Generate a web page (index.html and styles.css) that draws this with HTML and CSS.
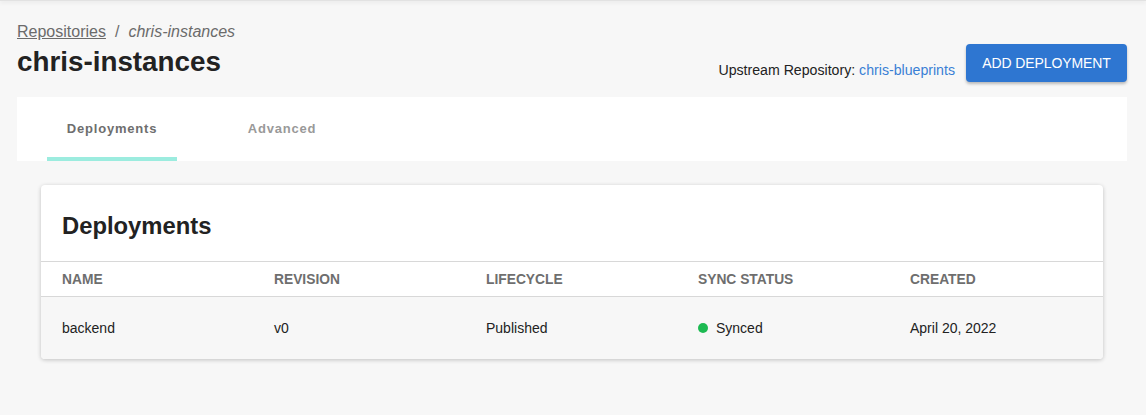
FILE: index.html
```html
<!DOCTYPE html>
<html>
<head>
<meta charset="utf-8">
<link rel="stylesheet" href="styles.css">
</head>
<body>
<div class="topshadow"></div>
<main class="page">
  <div class="header">
    <div class="titles">
      <div class="crumbs"><a class="crumb-link" href="#">Repositories</a><span class="sep">/</span><span class="crumb-current">chris-instances</span></div>
      <h1 class="title">chris-instances</h1>
    </div>
    <div class="actions">
      <span class="upstream">Upstream Repository: <a class="upstream-link" href="#">chris-blueprints</a></span>
      <button class="btn-primary">ADD DEPLOYMENT</button>
    </div>
  </div>
  <nav class="tabs">
    <div class="tab active">Deployments</div>
    <div class="tab">Advanced</div>
  </nav>
  <section class="card">
    <h2 class="card-title">Deployments</h2>
    <div class="row head">
      <div>NAME</div><div>REVISION</div><div>LIFECYCLE</div><div>SYNC STATUS</div><div>CREATED</div>
    </div>
    <div class="row body">
      <div>backend</div><div>v0</div><div>Published</div><div class="status"><span class="dot"></span>Synced</div><div>April 20, 2022</div>
    </div>
  </section>
</main>
</body>
</html>
```
FILE: styles.css
```css
* { box-sizing: border-box; }
html, body { margin: 0; padding: 0; }
body {
  background: #f7f7f7;
  font-family: "Liberation Sans", Arial, sans-serif;
  color: #222;
  width: 1146px;
  height: 415px;
  overflow: hidden;
}
.topshadow {
  height: 1px;
  background: #e2e2e2;
  box-shadow: 0 1px 4px rgba(0,0,0,0.18);
}
.page {
  padding: 19px 19px 0 17px;
}
.header {
  display: flex;
  justify-content: space-between;
  align-items: flex-end;
  height: 77px;
}
.titles { align-self: flex-start; }
.crumbs {
  font-size: 16px;
  color: #6b6b6b;
  line-height: 24px;
}
.crumb-link { color: #6b6b6b; text-decoration: underline; }
.sep { margin: 0 9px 0 9px; }
.crumb-current { font-style: italic; }
.title {
  margin: 0;
  font-size: 27.8px;
  font-weight: 700;
  line-height: 36px;
  color: #222;
}
.actions {
  display: flex;
  align-items: flex-end;
  gap: 11px;
  padding-bottom: 15px;
}
.upstream {
  font-size: 14.15px;
  color: #222;
  line-height: 18px;
  margin-bottom: 3px;
}
.upstream-link { color: #3a7fd5; text-decoration: none; }
.btn-primary {
  width: 161px;
  height: 38px;
  border: none;
  border-radius: 4px;
  background: #2e76d1;
  color: #fff;
  font-family: "Liberation Sans", Arial, sans-serif;
  font-size: 14px;
  font-weight: 500;
  letter-spacing: -0.1px;
  box-shadow: 0 2px 3px rgba(0,0,0,0.25);
  padding: 0;
}
.tabs {
  background: #fff;
  height: 64px;
  display: flex;
  padding-left: 30px;
  width: 1110px;
}
.tab {
  width: 130px;
  display: flex;
  align-items: center;
  justify-content: center;
  font-size: 13px;
  font-weight: 700;
  letter-spacing: 0.8px;
  color: #999;
  padding-top: 2px;
  margin-right: 40px;
  border-bottom: 4px solid transparent;
}
.tab.active {
  color: #6e6e6e;
  border-bottom-color: #9cecdf;
}
.card {
  margin: 24px 0 0 24px;
  width: 1062px;
  background: #fff;
  border-radius: 4px;
  box-shadow: 0 1px 4px rgba(0,0,0,0.22);
  overflow: hidden;
}
.card-title {
  margin: 0;
  font-size: 23.8px;
  font-weight: 700;
  line-height: 28px;
  color: #222;
  padding: 27px 21px 21px;
  border-bottom: 1px solid #d8d8d8;
}
.row {
  display: grid;
  grid-template-columns: 212px 212px 212px 212px 1fr;
  padding-left: 21px;
  align-items: center;
}
.row.head {
  height: 35px;
  font-size: 13.8px;
  font-weight: 700;
  color: #6e6e6e;
  border-bottom: 1px solid #d8d8d8;
}
.row.body {
  height: 62px;
  background: #f7f7f7;
  font-size: 14px;
  color: #222;
}
.status { display: flex; align-items: center; }
.dot {
  width: 10px;
  height: 10px;
  border-radius: 50%;
  background: #1dba52;
  margin-right: 8px;
}
```
